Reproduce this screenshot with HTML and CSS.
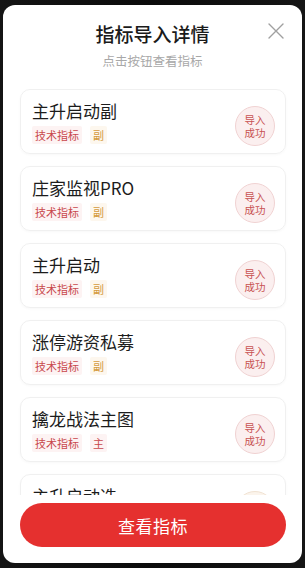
FILE: index.html
```html
<!DOCTYPE html>
<html lang="zh">
<head>
<meta charset="utf-8">
<title>指标导入详情</title>
<link rel="stylesheet" href="styles.css">
</head>
<body>
<div class="backdrop">
  <div class="modal">
    <header class="head">
      <h1 class="title">指标导入详情</h1>
      <p class="sub">点击按钮查看指标</p>
      <button class="close" aria-label="关闭">
        <svg width="16" height="16" viewBox="0 0 16 16"><path d="M1 1L15 15M15 1L1 15" stroke="#a0a0a0" stroke-width="1.4" fill="none" stroke-linecap="round"/></svg>
      </button>
    </header>
    <div class="list">
      <div class="card">
        <div class="info">
          <div class="name">主升启动副</div>
          <div class="tags"><span class="tag tech">技术指标</span><span class="tag gold">副</span></div>
        </div>
        <div class="badge">导入<br>成功</div>
      </div>
      <div class="card">
        <div class="info">
          <div class="name">庄家监视PRO</div>
          <div class="tags"><span class="tag tech">技术指标</span><span class="tag gold">副</span></div>
        </div>
        <div class="badge">导入<br>成功</div>
      </div>
      <div class="card">
        <div class="info">
          <div class="name">主升启动</div>
          <div class="tags"><span class="tag tech">技术指标</span><span class="tag gold">副</span></div>
        </div>
        <div class="badge">导入<br>成功</div>
      </div>
      <div class="card">
        <div class="info">
          <div class="name">涨停游资私募</div>
          <div class="tags"><span class="tag tech">技术指标</span><span class="tag gold">副</span></div>
        </div>
        <div class="badge">导入<br>成功</div>
      </div>
      <div class="card">
        <div class="info">
          <div class="name">擒龙战法主图</div>
          <div class="tags"><span class="tag tech">技术指标</span><span class="tag red">主</span></div>
        </div>
        <div class="badge">导入<br>成功</div>
      </div>
      <div class="card">
        <div class="info">
          <div class="name">主升启动选</div>
          <div class="tags"><span class="tag tech">技术指标</span><span class="tag red">选</span></div>
        </div>
        <div class="badge beige">导入<br>成功</div>
      </div>
    </div>
    <footer class="foot">
      <button class="btn">查看指标</button>
    </footer>
  </div>
</div>
</body>
</html>
```
FILE: styles.css
```css
* { box-sizing: border-box; }
html, body {
  margin: 0;
  padding: 0;
  width: 305px;
  height: 568px;
  overflow: hidden;
  background: #0e0e0e;
  font-family: "Noto Sans CJK SC", "Noto Sans", sans-serif;
}
.backdrop {
  width: 305px;
  height: 568px;
  padding: 5px 3px 5px 3px;
  background: linear-gradient(90deg, #141414 0%, #0b0b0b 50%, #151515 100%);
}
.modal {
  height: 558px;
  background: #fff;
  border-radius: 12px;
  display: flex;
  flex-direction: column;
  overflow: hidden;
}
.head {
  position: relative;
  padding: 16px 0 0;
  text-align: center;
}
.title {
  margin: 0;
  font-size: 19px;
  line-height: 26px;
  font-weight: 500;
  color: #1a1a1a;
}
.sub {
  margin: 4.5px 0 0;
  font-size: 12.5px;
  line-height: 18px;
  color: #a8a8a8;
}
.close {
  position: absolute;
  top: 18px;
  right: 18px;
  width: 16px;
  height: 16px;
  padding: 0;
  border: 0;
  background: none;
  display: flex;
}
.list {
  flex: 1;
  min-height: 0;
  overflow: hidden;
  margin-top: 19.5px;
  padding: 0 16px 0 17px;
  display: flex;
  flex-direction: column;
  gap: 12px;
}
.card {
  flex: none;
  height: 65px;
  border: 1px solid #f0f0f0;
  border-radius: 10px;
  padding: 9px 10px 8px 11px;
  display: flex;
  align-items: center;
  justify-content: space-between;
  box-shadow: 0 1px 3px rgba(0,0,0,0.03);
}
.info {
  display: flex;
  flex-direction: column;
  gap: 4px;
}
.name {
  font-size: 17px;
  line-height: 22px;
  color: #1c1c1c;
  font-weight: 400;
}
.tags {
  display: flex;
  gap: 8px;
}
.tag {
  font-size: 11px;
  line-height: 18px;
  height: 18px;
  padding: 0 3px;
  border-radius: 2px;
}
.tech { color: #c8474b; background: #fdf3f3; }
.gold { color: #d49a3c; background: #fdf7ee; }
.red { color: #c8474b; background: #fdf3f3; }
.badge {
  width: 40px;
  height: 40px;
  border-radius: 50%;
  border: 1px solid #f0d2d2;
  background: #fbefef;
  color: #c85252;
  font-size: 10.5px;
  line-height: 13px;
  text-align: center;
  display: flex;
  align-items: center;
  justify-content: center;
  margin-top: 8px;
}
.badge.beige {
  border-color: #f0e2d2;
  background: #fbf4ec;
}
.foot {
  padding: 8px 16px 16px 17px;
}
.btn {
  display: block;
  width: 100%;
  height: 44px;
  border: 0;
  border-radius: 22px;
  background: #e5302f;
  color: #fff;
  font-family: "Noto Sans CJK SC", "Noto Sans", sans-serif;
  font-size: 17px;
  letter-spacing: 0.5px;
}
```
